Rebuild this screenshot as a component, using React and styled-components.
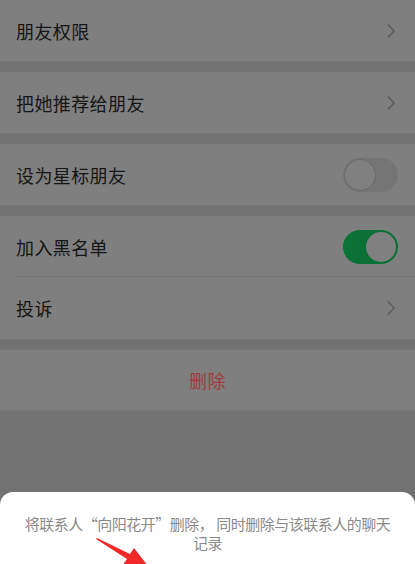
import React from "react";
import styled, { createGlobalStyle } from "styled-components";

const Global = createGlobalStyle`
  html, body { margin: 0; padding: 0; }
  body { font-family: "Noto Sans CJK SC", "Noto Sans", sans-serif; }
`;

const Page = styled.div`
  width: 415px;
  height: 564px;
  overflow: hidden;
  background: #727272;
  display: flex;
  flex-direction: column;
  position: relative;
`;

const Group = styled.div`
  background: #7f7f7f;
  margin-bottom: ${(p) => (p.$last ? "0" : "10px")};
  border-bottom: 1px solid #787878;
`;

const Row = styled.div`
  height: ${(p) => p.$h || 61}px;
  display: flex;
  align-items: center;
  justify-content: ${(p) => (p.$center ? "center" : "space-between")};
  padding: 0 16px;
  position: relative;
  ${(p) =>
    p.$divider &&
    `&::after { content: ""; position: absolute; left: 16px; right: 0; bottom: 0; height: 1px; background: #747474; }`}
`;

const Label = styled.span`
  font-size: 18px;
  color: ${(p) => (p.$danger ? "#9e3c3c" : "#151515")};
  letter-spacing: 0.4px;
`;

const Chevron = () => (
  <svg width="10" height="16" viewBox="0 0 10 16" style={{ marginRight: 3 }}>
    <path d="M2 1.5 L8 8 L2 14.5" fill="none" stroke="#5e5e5e" strokeWidth="1.6" />
  </svg>
);

const Track = styled.div`
  width: 55px;
  height: 34px;
  border-radius: 17px;
  box-sizing: border-box;
  background: ${(p) => (p.$on ? "#0a7237" : "#757575")};
  display: flex;
  align-items: center;
  justify-content: ${(p) => (p.$on ? "flex-end" : "flex-start")};
  padding: 2px;
  margin-right: 1px;
`;

const Knob = styled.div`
  width: 30px;
  height: 30px;
  border-radius: 50%;
  background: #808080;
  box-shadow: 0 0 0 1px ${(p) => (p.$on ? "#0b6e36" : "#6c6c6c")};
`;

const Toggle = ({ on }) => (
  <Track $on={on}>
    <Knob $on={on} />
  </Track>
);

const Spacer = styled.div`
  flex: 1;
`;

const Sheet = styled.div`
  background: #ffffff;
  border-radius: 13px 13px 0 0;
  height: 72px;
  padding: 22px 24px 0;
  box-sizing: border-box;
  position: relative;
`;

const SheetText = styled.p`
  margin: 0;
  text-align: center;
  font-size: 15px;
  line-height: 19px;
  letter-spacing: -0.5px;
  color: #8a8a8a;
`;

const Arrow = styled.svg`
  position: absolute;
  left: 92px;
  top: 44px;
`;

export default function App() {
  return (
    <>
      <Global />
      <Page>
        <Group>
          <Row $h={61}>
            <Label>朋友权限</Label>
            <Chevron />
          </Row>
        </Group>
        <Group>
          <Row $h={61}>
            <Label>把她推荐给朋友</Label>
            <Chevron />
          </Row>
        </Group>
        <Group>
          <Row $h={61}>
            <Label>设为星标朋友</Label>
            <Toggle on={false} />
          </Row>
        </Group>
        <Group>
          <Row $h={61} $divider>
            <Label>加入黑名单</Label>
            <Toggle on />
          </Row>
          <Row $h={62}>
            <Label>投诉</Label>
            <Chevron />
          </Row>
        </Group>
        <Group $last>
          <Row $h={60} $center>
            <Label $danger>删除</Label>
          </Row>
        </Group>
        <Spacer />
        <Sheet>
          <SheetText>将联系人“向阳花开”删除， 同时删除与该联系人的聊天记录</SheetText>
          <Arrow width="60" height="30" viewBox="0 0 60 30">
            <path d="M4 3 L5 2 L38 18 L42 12 L56 30 L30 30 L35 23 Z" fill="#f02828" />
          </Arrow>
        </Sheet>
      </Page>
    </>
  );
}
